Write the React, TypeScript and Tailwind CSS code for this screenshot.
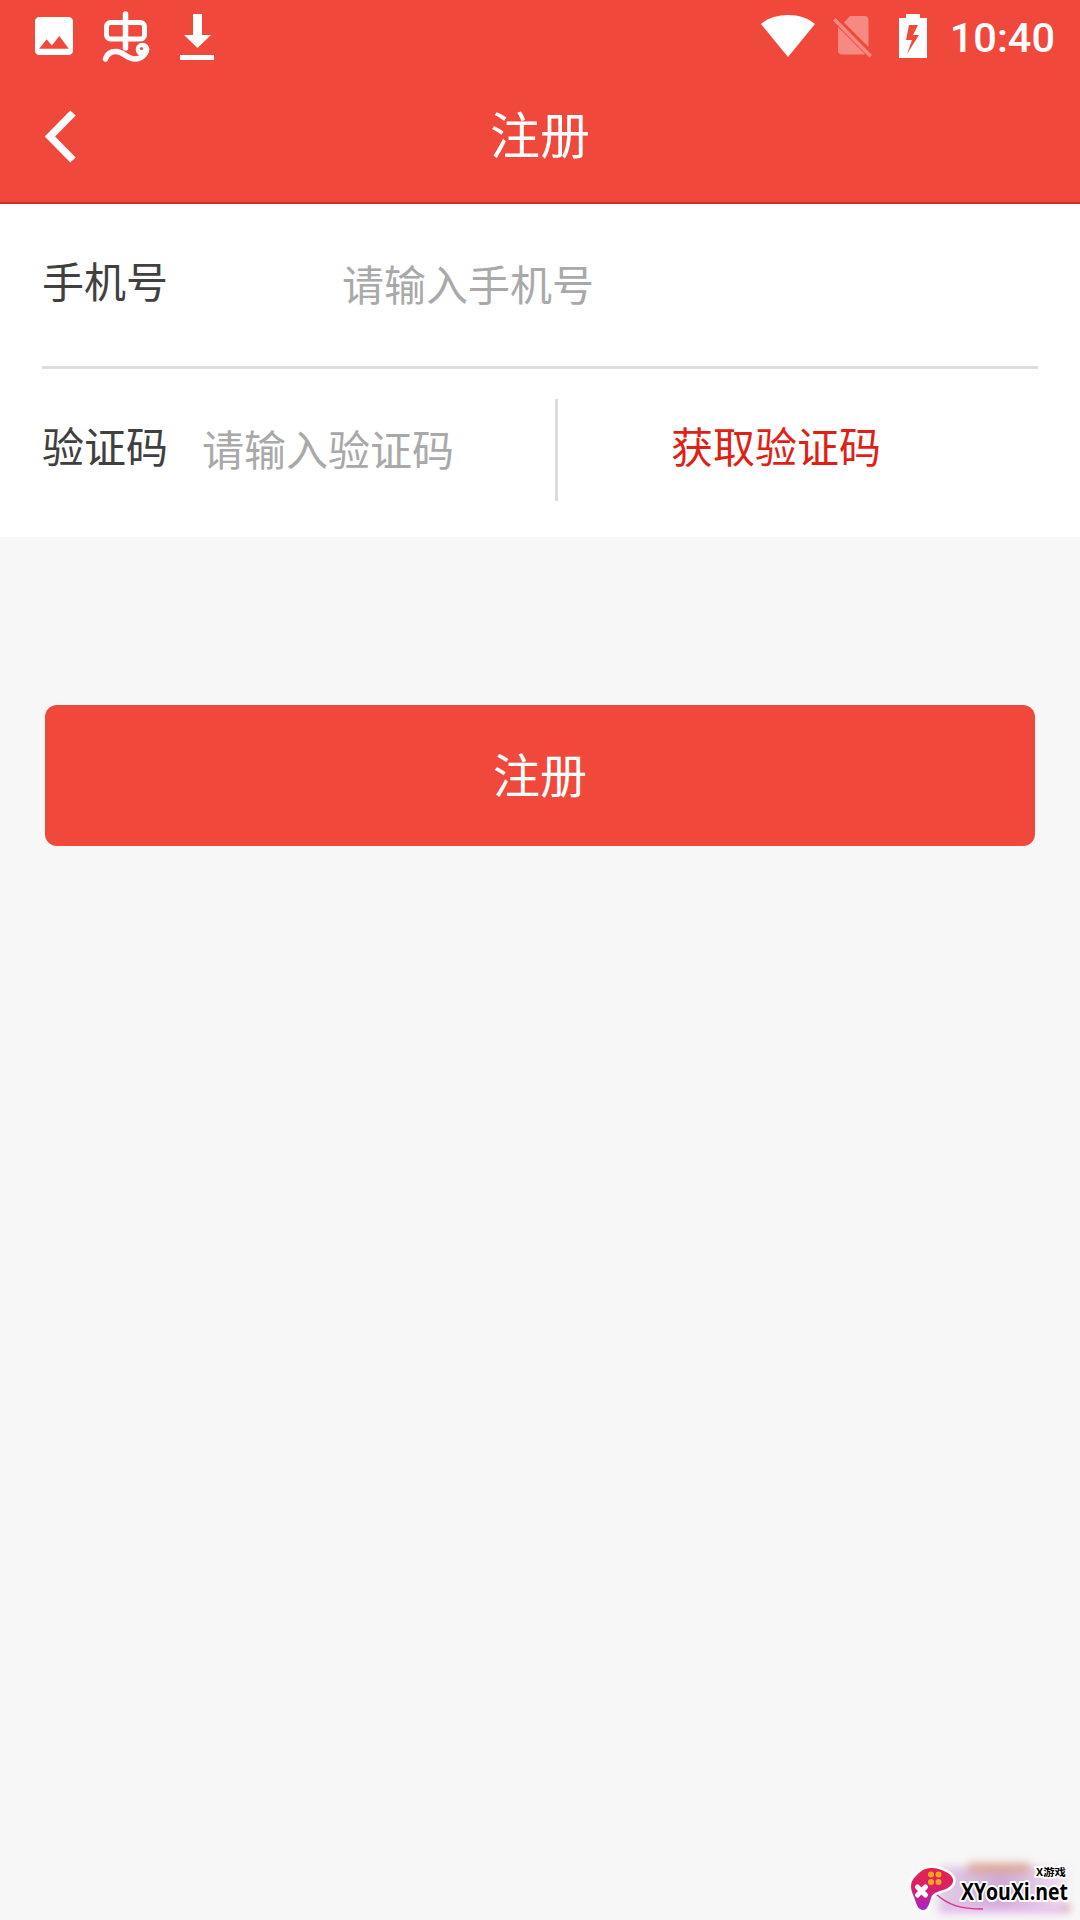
import type { ReactNode } from "react";

export default function App() {
  return (
    <div className="relative flex h-[1920px] w-[1080px] flex-col overflow-hidden bg-[#f7f7f7] font-['Noto_Sans_CJK_SC',sans-serif]">
      <header className="h-[204px] border-b-2 border-[#d92a20] bg-[#f1483c] text-white">
        <StatusBar />
        <NavBar title="注册" />
      </header>
      <main>
        <form>
          <div className="h-[333px] bg-white px-[42px]">
            <Field label="手机号">
              <span className="ml-[174px] pt-[5px] text-[#a9a9a9]">
                请输入手机号
              </span>
            </Field>
            <div className="h-[3px] bg-[#dcdcdc]" />
            <Field label="验证码">
              <span className="ml-[34px] pt-[5px] text-[#a9a9a9]">
                请输入验证码
              </span>
              <span className="ml-[101px] mt-[9px] h-[102px] w-[3px] bg-[#dcdcdc]" />
              <button type="button" className="ml-[113px] text-[#e01f17]">
                获取验证码
              </button>
            </Field>
          </div>
          <div className="px-[45px] pt-42">
            <button
              type="button"
              className="h-[141px] w-full rounded-xl bg-[#f1483c] pb-[5px] text-[47px] text-white"
            >
              注册
            </button>
          </div>
        </form>
      </main>
      <Watermark />
    </div>
  );
}

interface FieldProps {
  label: string;
  children: ReactNode;
}

function Field({ label, children }: FieldProps) {
  return (
    <div className="flex h-[162px] items-center pb-[10px] text-[42px] leading-[60px]">
      <label className="text-[#404040]">{label}</label>
      {children}
    </div>
  );
}

function NavBar({ title }: { title: string }) {
  return (
    <div className="grid h-[130px] grid-cols-3 items-center">
      <button type="button" className="pl-[44px]">
        <svg className="h-[56px] w-[34px]" viewBox="0 0 34 56" fill="none">
          <path
            d="M29 4L6 27.500 29 51"
            stroke="white"
            strokeWidth="7.500"
          />
        </svg>
      </button>
      <h1 className="pb-[11px] text-center text-[50px] leading-[64px]">
        {title}
      </h1>
    </div>
  );
}

function StatusBar() {
  return (
    <div className="flex h-[72px] items-center justify-between pl-[35px] pr-[25px]">
      <div className="flex items-center">
        <svg className="h-[38px] w-[38px]" viewBox="3 3 18 18" fill="white">
          <path d="M21 19V5c0-1.100-.9-2-2-2H5c-1.100 0-2 .9-2 2v14c0 1.100.9 2 2 2h14c1.100 0 2-.9 2-2zM8.500 13.500l2.500 3.010L14.500 12l4.500 6H5l3.500-4.500z" />
        </svg>
        <svg
          className="ml-[29px] h-[52px] w-[48px]"
          viewBox="0 0 48 52"
          fill="none"
          stroke="white"
          strokeWidth="5"
          strokeLinecap="round"
          strokeLinejoin="round"
        >
          <rect x="4.500" y="12.500" width="38" height="16.500" rx="4" />
          <path d="M23.500 4v34" strokeWidth="5.500" />
          <path
            d="M3.500 49C5 44 9 41.500 14 41.500c8 0 10 7.500 19 7.500 6 0 11-4 11.500-10"
            strokeWidth="5.500"
          />
          <circle cx="40.500" cy="39.500" r="6.800" fill="white" stroke="none" />
          <circle cx="39.500" cy="38.500" r="1.600" fill="#f1483c" stroke="none" />
        </svg>
        <svg
          className="ml-[30px] mt-[2px] h-[46px] w-[34px]"
          viewBox="0 0 34 46"
          fill="white"
        >
          <path d="M13 0h9v21h9L17.500 34 4 21h9zM0 41h34v5H0z" />
        </svg>
      </div>
      <div className="flex items-center">
        <svg className="h-[43px] w-[54px]" viewBox="0 0 54 43" fill="white">
          <path d="M0 9C7 3 16.500 0 27 0s20 3 27 9L27 42z" />
        </svg>
        <svg
          className="ml-[18px] mt-[2px] h-[42px] w-[39px]"
          viewBox="0 0 39 42"
          fill="#f68a82"
        >
          <path d="M17 0h14.500a4 4 0 0 1 4 4v27L11 6.500zM5 11l27 27-1 .5H9a4 4 0 0 1-4-4z" />
          <path d="M0 4.500L2.500 2 39 39l-2.500 2.500z" />
        </svg>
        <svg
          className="ml-[27px] h-[44px] w-[28px]"
          viewBox="0 0 28 44"
          fill="white"
        >
          <path
            fillRule="evenodd"
            d="M7 0h14v4h7v40H0V4h7zM10 11L7 26h6L8 40l12-19h-6l5-10z"
          />
        </svg>
        <time className="ml-[23px] pt-[4px] font-['Roboto',sans-serif] text-[41.500px] font-medium leading-none">
          10:40
        </time>
      </div>
    </div>
  );
}

function Watermark() {
  return (
    <svg
      className="absolute bottom-0 right-0 h-[70px] w-[190px]"
      viewBox="0 0 190 70"
    >
      <defs>
        <linearGradient id="pad" x1="0" y1="0" x2="0" y2="1">
          <stop offset="0" stopColor="#e3224d" />
          <stop offset=".5" stopColor="#d8206b" />
          <stop offset="1" stopColor="#a724cf" />
        </linearGradient>
        <linearGradient id="glow" x1="0" y1="0" x2="1" y2="0">
          <stop offset="0" stopColor="#e3cfe8" />
          <stop offset=".5" stopColor="#cfa9d2" />
          <stop offset="1" stopColor="#f3e6f5" />
        </linearGradient>
        <filter id="soft" x="-30%" y="-80%" width="160%" height="260%">
          <feGaussianBlur stdDeviation="4" />
        </filter>
      </defs>
      <g filter="url(#soft)">
        <rect x="48" y="17" width="129" height="45" fill="url(#glow)" />
        <rect x="78" y="13" width="62" height="10" fill="#dba79a" />
        <rect x="50" y="56" width="122" height="7" fill="#e3b5ea" />
        <circle cx="176" cy="58" r="4" fill="#d98aa8" />
      </g>
      <path
        d="M46 44c12 11 24 15 47 15"
        fill="none"
        stroke="#d6348d"
        strokeWidth="1.500"
      />
      <path
        d="M40 18c5-.5 10 1 16 4 10 5 9 13 0 17-8 3-13 3-15 9-2 7-4 13-9 12-5-1-6-8-8-13-4-8-4-14 0-19 4-4 8-9.500 16-10z"
        fill="url(#pad)"
        stroke="white"
        strokeWidth="5"
        paintOrder="stroke"
      />
      <g fill="#f9a51b">
        <circle cx="41" cy="24.500" r="3" />
        <circle cx="48.500" cy="24.500" r="3" />
        <circle cx="41" cy="32" r="3" />
        <circle cx="48.500" cy="32" r="3" />
      </g>
      <path
        d="M27.500 37l8 8m0-8l-8 8"
        stroke="white"
        strokeWidth="5"
        strokeLinecap="round"
      />
      <g
        fill="black"
        stroke="white"
        strokeWidth="4"
        strokeLinejoin="round"
        paintOrder="stroke"
        fontWeight="700"
      >
        <text
          x="146"
          y="26"
          fontSize="10.500"
          textLength="30"
          lengthAdjust="spacingAndGlyphs"
        >
          X游戏
        </text>
        <text
          x="71"
          y="50"
          fontSize="24"
          fontFamily="Open Sans"
          textLength="107"
          lengthAdjust="spacingAndGlyphs"
        >
          XYouXi.net
        </text>
      </g>
    </svg>
  );
}
